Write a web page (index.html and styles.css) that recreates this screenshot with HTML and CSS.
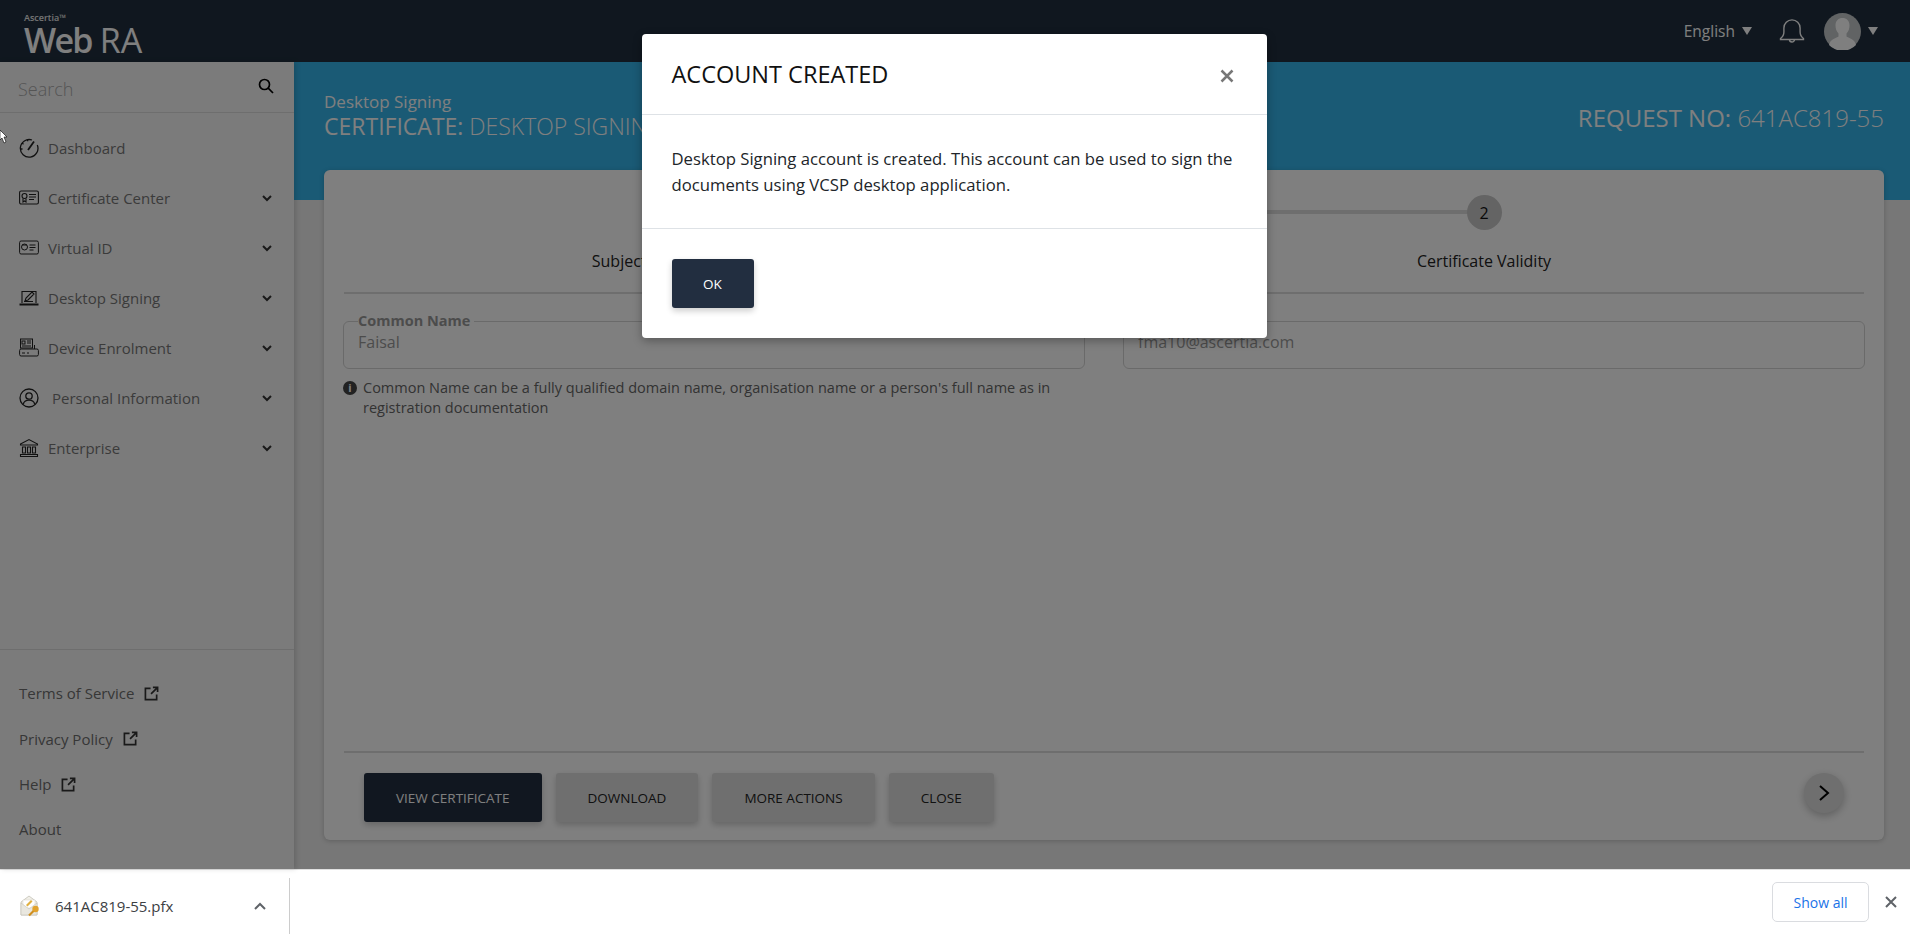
FILE: index.html
```html
<!DOCTYPE html>
<html lang="en">
<head>
    <meta charset="UTF-8">
    <meta name="viewport" content="width=device-width, initial-scale=1.0">
    <title>WebRA - Desktop Signing</title>
    <link rel="stylesheet" href="styles.css">
</head>
<body>
    <div class="app">
        <header class="topbar">
            <div class="logo">
                <span class="logo-small">Ascertia™</span>
                <span class="logo-big">Web<span class="logo-ra">RA</span></span>
            </div>
            <div class="top-right">
                <span class="lang">English</span>
                <span class="caret caret-lang"></span>
                <svg class="bell" viewBox="0 0 26 26" fill="none" stroke="#fff" stroke-width="1.4">
                    <path d="M1.5 20.5c2.2-1.6 3.4-3 3.4-6.5V10a8.1 8.1 0 0 1 16.2 0v4c0 3.500 1.200 4.900 3.400 6.500v1H1.500z"/>
                    <path d="M10.500 21.500a2.500 2.500 0 0 0 5 0"/>
                </svg>
                <svg class="avatar" viewBox="0 0 37 37">
                    <circle cx="18.500" cy="18.500" r="18.500" fill="#c2c6c8"/>
                    <path d="M5 32c1-6 8-7 9.500-8.500v-3c-2-2-3-5-3-8 0-5 3-7.500 7-7.500s7 2.500 7 7.500c0 3-1 6-3 8v3C24 25 31 26 32 32a18.500 18.500 0 0 1-27 0z" fill="#ffffff"/>
                </svg>
                <span class="caret"></span>
            </div>
        </header>

        <div class="layout">
            <aside class="sidebar">
                <div class="search">
                    <span class="search-text">Search</span>
                    <svg viewBox="0 0 16 16" class="search-icon" fill="none" stroke="#000" stroke-width="1.700">
                        <circle cx="6.500" cy="6.500" r="5"/>
                        <path d="M10.200 10.200L15 15"/>
                    </svg>
                </div>
                <nav class="nav">
                    <a class="nav-item">
                        <svg class="nav-icon" viewBox="0 0 20 20" fill="none" stroke="#222" stroke-width="1.300">
                            <path d="M13 2A8.800 8.800 0 1 0 18.300 7"/>
                            <path d="M8.600 1.300v2M3 5l1.500 1.200M1.500 11h2"/>
                            <path d="M9 12L15 3.500" stroke-width="1.800"/>
                        </svg>
                        <span>Dashboard</span>
                    </a>
                    <a class="nav-item">
                        <svg class="nav-icon" viewBox="0 0 20 20" fill="none" stroke="#222" stroke-width="1.100">
                            <rect x="0.600" y="3" width="18.800" height="13" rx="1.500"/>
                            <circle cx="5.500" cy="8" r="2.500"/>
                            <path d="M4 10.500V14l1.500-1 1.500 1v-3.500M10 6.500h7M10 9h7M10 11.500h5"/>
                        </svg>
                        <span>Certificate Center</span>
                        <svg class="chevron" viewBox="0 0 10 7"><path d="M1 1l4 4 4-4"/></svg>
                    </a>
                    <a class="nav-item">
                        <svg class="nav-icon" viewBox="0 0 20 20" fill="none" stroke="#222" stroke-width="1">
                            <rect x="0.600" y="3" width="18.800" height="13" rx="1.500"/>
                            <circle cx="5.500" cy="9" r="3"/>
                            <path d="M3 7h5M10.500 7h6M10.500 9.500h6M10.500 12h4"/>
                        </svg>
                        <span>Virtual ID</span>
                        <svg class="chevron" viewBox="0 0 10 7"><path d="M1 1l4 4 4-4"/></svg>
                    </a>
                    <a class="nav-item">
                        <svg class="nav-icon" viewBox="0 0 20 20" fill="none" stroke="#222" stroke-width="1.100">
                            <path d="M3 15V3.500h14V15"/>
                            <path d="M0.500 16.500h19" stroke-width="2"/>
                            <path d="M6 13l1-3 6-6 2 2-6 6zM5 13.500h9"/>
                        </svg>
                        <span>Desktop Signing</span>
                        <svg class="chevron" viewBox="0 0 10 7"><path d="M1 1l4 4 4-4"/></svg>
                    </a>
                    <a class="nav-item">
                        <svg class="nav-icon" viewBox="0 0 20 20" fill="none" stroke="#222" stroke-width="1">
                            <rect x="1.500" y="1" width="12" height="9"/>
                            <rect x="3" y="3" width="3" height="3"/>
                            <path d="M8 3h4M8 5h4M3 8h9M15.500 7V11"/>
                            <rect x="0.600" y="11" width="18.800" height="7" rx="1.500"/>
                            <path d="M3 15h3M8 15h2"/>
                        </svg>
                        <span>Device Enrolment</span>
                        <svg class="chevron" viewBox="0 0 10 7"><path d="M1 1l4 4 4-4"/></svg>
                    </a>
                    <a class="nav-item nav-item-wide">
                        <svg class="nav-icon" viewBox="0 0 20 20" fill="none" stroke="#222" stroke-width="1.300">
                            <circle cx="10" cy="10" r="9"/>
                            <circle cx="10" cy="8" r="3.200"/>
                            <path d="M4.200 16.500c.6-3 3-4.300 5.800-4.300s5.200 1.300 5.800 4.300"/>
                        </svg>
                        <span>Personal Information</span>
                        <svg class="chevron" viewBox="0 0 10 7"><path d="M1 1l4 4 4-4"/></svg>
                    </a>
                    <a class="nav-item">
                        <svg class="nav-icon" viewBox="0 0 20 20" fill="none" stroke="#222" stroke-width="1.100">
                            <path d="M1.500 6L10 1.500 18.500 6v1h-17z"/>
                            <path d="M3.500 9h3v6h-3zM8.500 9h3v6h-3zM13.500 9h3v6h-3zM1.500 16.500h17v2h-17z"/>
                        </svg>
                        <span>Enterprise</span>
                        <svg class="chevron" viewBox="0 0 10 7"><path d="M1 1l4 4 4-4"/></svg>
                    </a>
                </nav>
                <div class="side-links">
                    <a class="side-link">Terms of Service
                        <svg class="ext" viewBox="0 0 16 16" fill="none" stroke="#333" stroke-width="1.800"><path d="M7 2.500H1.500v12h12V9M9.500 1.500h5v5M14 2L7.500 8.500"/></svg>
                    </a>
                    <a class="side-link">Privacy Policy
                        <svg class="ext" viewBox="0 0 16 16" fill="none" stroke="#333" stroke-width="1.800"><path d="M7 2.500H1.500v12h12V9M9.500 1.500h5v5M14 2L7.500 8.500"/></svg>
                    </a>
                    <a class="side-link">Help
                        <svg class="ext" viewBox="0 0 16 16" fill="none" stroke="#333" stroke-width="1.800"><path d="M7 2.500H1.500v12h12V9M9.500 1.500h5v5M14 2L7.500 8.500"/></svg>
                    </a>
                    <a class="side-link">About</a>
                </div>
            </aside>

            <main class="main">
                <div class="banner">
                    <div class="banner-left">
                        <div class="banner-sub">Desktop Signing</div>
                        <div class="banner-title"><b>CERTIFICATE:</b> DESKTOP SIGNING</div>
                    </div>
                    <div class="banner-req"><b>REQUEST NO:</b> 641AC819-55</div>
                </div>

                <section class="card">
                    <div class="stepper">
                        <div class="step">
                            <div class="step-num step-num-active">1</div>
                            <div class="step-label">Subject Distinguished Name Details</div>
                        </div>
                        <div class="step">
                            <div class="step-num">2</div>
                            <div class="step-label">Certificate Validity</div>
                        </div>
                    </div>

                    <div class="fields">
                        <div class="field">
                            <fieldset class="field-box">
                                <legend>Common Name</legend>
                                <div class="field-value">Faisal</div>
                            </fieldset>
                            <div class="hint">
                                <span class="hint-icon">i</span>
                                <span>Common Name can be a fully qualified domain name, organisation name or a person's full name as in registration documentation</span>
                            </div>
                        </div>
                        <div class="field">
                            <fieldset class="field-box">
                                <legend>Email</legend>
                                <div class="field-value">fma10@ascertia.com</div>
                            </fieldset>
                        </div>
                    </div>

                    <div class="card-footer">
                        <button class="btn btn-dark">VIEW CERTIFICATE</button>
                        <button class="btn">DOWNLOAD</button>
                        <button class="btn">MORE ACTIONS</button>
                        <button class="btn">CLOSE</button>
                        <button class="btn-next">
                            <svg viewBox="0 0 12 18" fill="none" stroke="#000" stroke-width="2"><path d="M2 2l8 7-8 7"/></svg>
                        </button>
                    </div>
                </section>
            </main>
        </div>

        <div class="overlay">
            <svg class="cursor" viewBox="0 0 8 14"><path d="M0 0l7 7H4l2 5-2 1-2-5-2 2z" fill="#fff" stroke="#000" stroke-width=".6"/></svg>
            <div class="modal">
                <div class="modal-header">
                    <span class="modal-title">ACCOUNT CREATED</span>
                    <svg class="modal-close" viewBox="0 0 14 14" fill="none" stroke="#777" stroke-width="2.500"><path d="M1.500 1.500l11 11M12.500 1.500l-11 11"/></svg>
                </div>
                <div class="modal-body">Desktop Signing account is created. This account can be used to sign the documents using VCSP desktop application.</div>
                <div class="modal-footer">
                    <button class="btn btn-dark btn-ok">OK</button>
                </div>
            </div>
        </div>
    </div>

    <footer class="download-bar">
        <div class="download-item">
            <svg class="file-icon" viewBox="0 0 20 22">
                <path d="M1 7l8-6 8 6v13H1z" fill="#f1efe8" stroke="#c4c1b6" stroke-width=".8"/>
                <path d="M3 5h12v8H3z" fill="#fff" stroke="#d5d2c8" stroke-width=".5"/>
                <path d="M6 10l5-5 1.500 1.500-5 5z" fill="#e0b040"/>
                <path d="M1 8l8 6 8-6v12H1z" fill="#e9e7df" stroke="#c4c1b6" stroke-width=".6"/>
                <circle cx="15.500" cy="14" r="3.200" fill="#e2a32e"/>
                <path d="M13.500 16L9 20.500" stroke="#d08f1f" stroke-width="2.200"/>
            </svg>
            <span class="file-name">641AC819-55.pfx</span>
            <svg class="file-caret" viewBox="0 0 12 8" fill="none" stroke="#5f6368" stroke-width="2"><path d="M1 7l5-5 5 5"/></svg>
        </div>
        <button class="show-all">Show all</button>
        <svg class="bar-close" viewBox="0 0 12 12" fill="none" stroke="#5f6368" stroke-width="2"><path d="M1 1l10 10M11 1L1 11"/></svg>
    </footer>
</body>
</html>
```

FILE: styles.css
```css
* {
    box-sizing: border-box;
}

html, body {
    height: 100%;
}

body {
    margin: 0;
    display: flex;
    flex-direction: column;
    height: 934px;
    overflow: hidden;
    font-family: 'Open Sans', 'Noto Sans', sans-serif;
    color: #222;
    background: #eee;
}

.app {
    position: relative;
    flex: 1;
    display: flex;
    flex-direction: column;
    min-height: 0;
}

/* top bar */
.topbar {
    height: 62px;
    flex-shrink: 0;
    display: flex;
    justify-content: space-between;
    align-items: center;
    background: #202f3e;
}

.logo {
    display: flex;
    flex-direction: column;
    margin-left: 24px;
    padding-top: 6px;
    color: #fff;
}

.logo-small {
    font-size: 9px;
    line-height: 12px;
    font-weight: 600;
    color: #e8e8e8;
}

.logo-big {
    font-size: 34px;
    line-height: 32px;
    font-weight: 600;
    letter-spacing: -0.05em;
}

.logo-ra {
    margin-left: 8px;
    font-weight: 400;
    letter-spacing: 0;
}

.top-right {
    display: flex;
    align-items: center;
    margin-right: 32px;
    color: #fff;
}

.lang {
    font-size: 15.5px;
}

.caret {
    width: 0;
    height: 0;
    border-left: 5px solid transparent;
    border-right: 5px solid transparent;
    border-top: 8px solid #fff;
    margin-left: 7px;
}

.caret-lang {
    margin-right: 27px;
}

.bell {
    width: 26px;
    height: 26px;
    margin-right: 19px;
}

.avatar {
    width: 37px;
    height: 37px;
}

/* sidebar */
.layout {
    flex: 1;
    display: flex;
    min-height: 0;
}

.sidebar {
    width: 294px;
    flex-shrink: 0;
    display: flex;
    flex-direction: column;
    background: #f7f7f7;
    box-shadow: 2px 0 5px rgba(0,0,0,0.15);
    z-index: 1;
}

.search {
    height: 51px;
    display: flex;
    justify-content: space-between;
    align-items: center;
    padding: 4px 20px 0 18px;
    border-bottom: 1px solid #ddd;
}

.search-text {
    font-size: 18px;
    font-weight: 300;
    color: #aaa;
}

.search-icon {
    width: 16px;
    height: 16px;
    margin-bottom: 6px;
}

.nav {
    padding-top: 10px;
}

.nav-item {
    height: 50px;
    display: flex;
    align-items: center;
    gap: 9px;
    padding: 0 22px 0 19px;
    font-size: 15px;
    color: #777;
}

.nav-item-wide {
    gap: 13px;
}

.nav-icon {
    width: 20px;
    height: 20px;
    flex-shrink: 0;
}

.chevron {
    width: 10px;
    height: 7px;
    margin-left: auto;
    fill: none;
    stroke: #333;
    stroke-width: 2;
}

.side-links {
    margin-top: auto;
    padding: 21px 0 17px;
    border-top: 1px solid #ddd;
}

.side-link {
    height: 45.300px;
    display: flex;
    align-items: center;
    gap: 10px;
    padding-left: 19px;
    font-size: 15px;
    color: #6e6e6e;
}

.ext {
    width: 15px;
    height: 15px;
}

/* main area */
.main {
    flex: 1;
    min-width: 0;
    display: flex;
    flex-direction: column;
}

.banner {
    height: 138px;
    flex-shrink: 0;
    display: flex;
    justify-content: space-between;
    padding: 29px 26px 0 30px;
    background: #34b4ea;
    color: #fff;
}

.banner-sub {
    font-size: 17px;
    line-height: 22px;
}

.banner-title {
    font-size: 23px;
    line-height: 26px;
    font-weight: 300;
}

.banner-req {
    font-size: 24px;
    line-height: 32px;
    margin-top: 11px;
    font-weight: 300;
}

.card {
    flex: 1;
    display: flex;
    flex-direction: column;
    margin: -30px 26px 29px 30px;
    background: #fff;
    border-radius: 6px;
    box-shadow: 0 1px 5px rgba(0,0,0,0.2);
}

.stepper {
    display: grid;
    grid-template-columns: 1fr 1fr;
    margin: 0 20px;
    padding-top: 25px;
    height: 124px;
    border-bottom: 2px solid #ddd;
}

.step {
    position: relative;
    display: flex;
    flex-direction: column;
    align-items: center;
}

.step + .step::before {
    content: "";
    position: absolute;
    top: 15px;
    right: 50%;
    width: 100%;
    height: 4px;
    background: #dcdcdc;
}

.step-num {
    position: relative;
    width: 35px;
    height: 35px;
    border-radius: 50%;
    display: flex;
    align-items: center;
    justify-content: center;
    font-size: 16px;
    background: #c8c8c8;
    color: #111;
}

.step-num-active {
    background: #202f3e;
    color: #fff;
}

.step-label {
    margin-top: 20px;
    font-size: 16px;
    line-height: 22px;
    color: #222;
}

.fields {
    flex: 1;
    display: grid;
    grid-template-columns: 1fr 1fr;
    gap: 38px;
    padding: 18px 19px 0;
}

.field-box {
    height: 57px;
    margin: 0;
    padding: 0 14px;
    border: 1px solid #d4d4d4;
    border-radius: 6px;
}

.field-box legend {
    padding: 0 4px 0 0;
    font-size: 14.500px;
    line-height: 18px;
    font-weight: 700;
    color: #999;
}

.field-value {
    font-size: 16px;
    line-height: 24px;
    color: #999;
}

.hint {
    display: flex;
    gap: 6px;
    margin-top: 9px;
    padding-right: 20px;
    font-size: 14.500px;
    line-height: 20px;
    color: #666;
}

.hint-icon {
    width: 14px;
    height: 14px;
    margin-top: 3px;
    flex-shrink: 0;
    border-radius: 50%;
    background: #444;
    color: #fff;
    font-size: 11px;
    font-weight: 700;
    line-height: 14px;
    text-align: center;
}

.card-footer {
    display: flex;
    align-items: flex-start;
    gap: 14px;
    margin: 0 20px;
    padding: 20px 20px 18px;
    border-top: 2px solid #ddd;
}

.btn {
    height: 49px;
    padding: 0 32px;
    border: none;
    border-radius: 3px;
    background: #dedede;
    color: #222;
    font-family: inherit;
    font-size: 13.500px;
    box-shadow: 0 3px 6px rgba(0,0,0,0.2);
}

.btn-dark {
    background: #222e40;
    color: #fff;
}

.btn-next {
    width: 40px;
    height: 40px;
    margin-left: auto;
    border: none;
    border-radius: 50%;
    background: #dedede;
    box-shadow: 0 3px 8px rgba(0,0,0,0.25);
    display: flex;
    align-items: center;
    justify-content: center;
}

.btn-next svg {
    width: 12px;
    height: 18px;
}

/* modal */
.overlay {
    position: absolute;
    inset: 0;
    z-index: 5;
    display: flex;
    justify-content: center;
    align-items: flex-start;
    background: rgba(0,0,0,0.5);
}

.cursor {
    position: absolute;
    left: 0;
    top: 130px;
    width: 8px;
    height: 14px;
}

.modal {
    width: 625px;
    margin: 34px 2px 0 0;
    background: #fff;
    border-radius: 4px;
    box-shadow: 0 3px 10px rgba(0,0,0,0.3);
}

.modal-header {
    height: 81px;
    display: flex;
    justify-content: space-between;
    align-items: center;
    padding: 0 33px 0 30px;
    border-bottom: 1px solid #dee2e6;
}

.modal-title {
    font-size: 23.500px;
    color: #111;
}

.modal-close {
    width: 14px;
    height: 14px;
    margin-top: 4px;
}

.modal-body {
    height: 113px;
    padding: 31px 30px 0;
    font-size: 16.700px;
    line-height: 26px;
    color: #212529;
}

.modal-footer {
    height: 110px;
    padding: 30px;
    border-top: 1px solid #dee2e6;
}

.btn-ok {
    width: 82px;
    padding: 0;
}

/* chrome download shelf */
.download-bar {
    height: 65px;
    flex-shrink: 0;
    display: flex;
    align-items: center;
    padding-right: 13px;
    background: #fff;
    border-top: 1px solid #e0e0e0;
}

.download-item {
    width: 290px;
    height: 56px;
    align-self: flex-end;
    display: flex;
    align-items: center;
    padding-left: 20px;
    border-right: 1px solid #ccc;
}

.file-icon {
    width: 20px;
    height: 22px;
}

.file-name {
    margin-left: 15px;
    font-size: 15px;
    color: #3c4043;
}

.file-caret {
    width: 12px;
    height: 8px;
    margin-left: auto;
    margin-right: 23px;
}

.show-all {
    width: 97px;
    height: 40px;
    margin-left: auto;
    border: 1px solid #dadce0;
    border-radius: 5px;
    background: #fff;
    color: #1a73e8;
    font-family: inherit;
    font-size: 14px;
}

.bar-close {
    width: 12px;
    height: 12px;
    margin-left: 16px;
}
```
